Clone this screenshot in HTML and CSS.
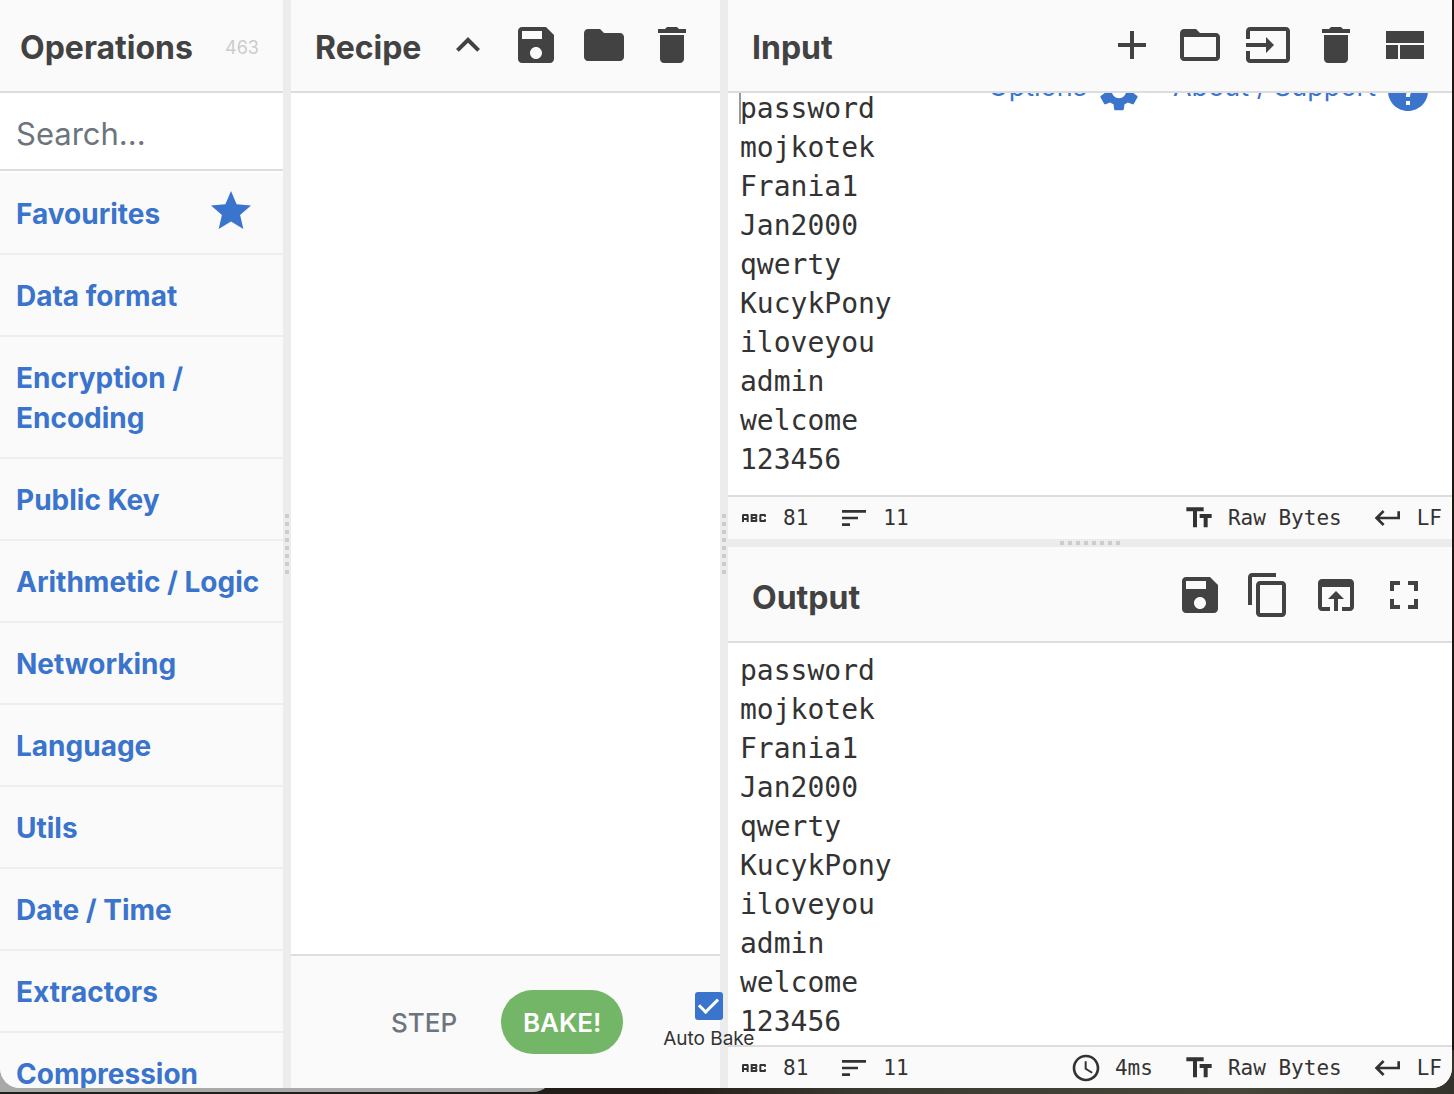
FILE: index.html
```html
<!DOCTYPE html>
<html lang="en">
<head>
<meta charset="utf-8">
<title>CyberChef</title>
<link rel="stylesheet" href="styles.css">
</head>
<body>
<svg class="sprite" aria-hidden="true">
  <symbol id="save" viewBox="0 0 24 24"><path d="M17 3H5c-1.11 0-2 .9-2 2v14c0 1.1.89 2 2 2h14c1.1 0 2-.9 2-2V7l-4-4zm-5 16c-1.66 0-3-1.34-3-3s1.34-3 3-3 3 1.34 3 3-1.34 3-3 3zm3-10H5V5h10v4z"/></symbol>
  <symbol id="folder" viewBox="0 0 24 24"><path d="M10 4H4c-1.1 0-1.99.9-1.99 2L2 18c0 1.1.9 2 2 2h16c1.1 0 2-.9 2-2V8c0-1.1-.9-2-2-2h-8l-2-2z"/></symbol>
  <symbol id="folder-open" viewBox="0 0 24 24"><path d="M20 6h-8l-2-2H4c-1.1 0-1.99.9-1.99 2L2 18c0 1.1.9 2 2 2h16c1.1 0 2-.9 2-2V8c0-1.1-.9-2-2-2zm0 12H4V8h16v10z"/></symbol>
  <symbol id="delete" viewBox="0 0 24 24"><path d="M6 19c0 1.1.9 2 2 2h8c1.1 0 2-.9 2-2V7H6v12zM19 4h-3.5l-1-1h-5l-1 1H5v2h14V4z"/></symbol>
  <symbol id="chevron" viewBox="0 0 24 24"><path d="M7.41 15.41L12 10.83l4.59 4.58L18 14l-6-6-6 6z"/></symbol>
  <symbol id="add" viewBox="0 0 24 24"><path d="M19 13h-6v6h-2v-6H5v-2h6V5h2v6h6v2z"/></symbol>
  <symbol id="input-icon" viewBox="0 0 24 24"><path d="M21 3.01H3c-1.1 0-2 .9-2 2V9h2V4.99h18v14.03H3V15H1v4.01c0 1.1.9 1.98 2 1.98h18c1.1 0 2-.88 2-1.98v-14c0-1.11-.9-2-2-2zM11 16l4-4-4-4v3H1v2h10v3z"/></symbol>
  <symbol id="layout" viewBox="0 0 24 24"><path d="M3 19h6v-7H3v7zm7 0h12v-7H10v7zM3 5v6h19V5H3z"/></symbol>
  <symbol id="copy" viewBox="0 0 24 24"><path d="M16 1H4c-1.1 0-2 .9-2 2v14h2V3h12V1zm3 4H8c-1.1 0-2 .9-2 2v14c0 1.1.9 2 2 2h11c1.1 0 2-.9 2-2V7c0-1.1-.9-2-2-2zm0 16H8V7h11v14z"/></symbol>
  <symbol id="open" viewBox="0 0 24 24"><path d="M19 4H5c-1.11 0-2 .9-2 2v12c0 1.1.89 2 2 2h4v-2H5V8h14v10h-4v2h4c1.1 0 2-.9 2-2V6c0-1.1-.89-2-2-2zm-7 6l-4 4h3v6h2v-6h3l-4-4z"/></symbol>
  <symbol id="fullscreen" viewBox="0 0 24 24"><path d="M7 14H5v5h5v-2H7v-3zm-2-4h2V7h3V5H5v5zm12 7h-3v2h5v-5h-2v3zM14 5v2h3v3h2V5h-5z"/></symbol>
  <symbol id="star" viewBox="0 0 24 24"><path d="M12 17.27L18.18 21l-1.64-7.03L22 9.24l-7.19-.61L12 2 9.19 8.63 2 9.24l5.46 4.73L5.82 21z"/></symbol>
  <symbol id="settings" viewBox="0 0 24 24"><path d="M19.14 12.94c.04-.3.06-.61.06-.94 0-.32-.02-.64-.07-.94l2.03-1.58c.18-.14.23-.41.12-.61l-1.92-3.32c-.12-.22-.37-.29-.59-.22l-2.39.96c-.5-.38-1.03-.7-1.62-.94l-.36-2.54c-.04-.24-.24-.41-.48-.41h-3.84c-.24 0-.43.17-.47.41l-.36 2.54c-.59.24-1.13.57-1.62.94l-2.39-.96c-.22-.08-.47 0-.59.22L2.74 8.87c-.12.21-.08.47.12.61l2.03 1.58c-.05.3-.09.63-.09.94s.02.64.07.94l-2.03 1.58c-.18.14-.23.41-.12.61l1.92 3.32c.12.22.37.29.59.22l2.39-.96c.5.38 1.03.7 1.62.94l.36 2.54c.05.24.24.41.48.41h3.84c.24 0 .44-.17.47-.41l.36-2.54c.59-.24 1.13-.56 1.62-.94l2.39.96c.22.08.47 0 .59-.22l1.92-3.32c.12-.22.07-.47-.12-.61l-2.01-1.58zM12 15.6c-1.98 0-3.6-1.62-3.6-3.6s1.62-3.6 3.6-3.6 3.6 1.62 3.6 3.6-1.62 3.6-3.6 3.6z"/></symbol>
  <symbol id="help" viewBox="0 0 24 24"><path d="M12 2C6.48 2 2 6.48 2 12s4.48 10 10 10 10-4.48 10-10S17.52 2 12 2zm1 17h-2v-2h2v2zm2.07-7.75l-.9.92C13.45 12.9 13 13.5 13 15h-2v-.5c0-1.1.45-2.1 1.17-2.83l1.24-1.26c.37-.36.59-.86.59-1.41 0-1.1-.9-2-2-2s-2 .9-2 2H8c0-2.21 1.79-4 4-4s4 1.79 4 4c0 .88-.36 1.68-.93 2.25z"/></symbol>
  <symbol id="abc" viewBox="0 0 24 24"><path d="M21 11h-1.5v-.5h-2v3h2V13H21v1c0 .55-.45 1-1 1h-3c-.55 0-1-.45-1-1v-4c0-.55.45-1 1-1h3c.55 0 1 .45 1 1v1zM8 10v5H6.5v-1.5h-2V15H3v-5c0-.55.45-1 1-1h3c.55 0 1 .45 1 1zm-1.500.5h-2V12h2v-1.500zM13.500 12c.55 0 1 .45 1 1v1c0 .55-.45 1-1 1h-4V9h4c.55 0 1 .45 1 1v1c0 .55-.45 1-1 1zM11 10.500v.75h2v-.75h-2zm2 2.250h-2v.75h2v-.75z"/></symbol>
  <symbol id="sort" viewBox="0 0 24 24"><path d="M3 18h6v-2H3v2zM3 6v2h18V6H3zm0 7h12v-2H3v2z"/></symbol>
  <symbol id="text-fields" viewBox="0 0 24 24"><path d="M2.500 4v3h5v12h3V7h5V4h-13zm19 5h-9v3h3v7h3v-7h3V9z"/></symbol>
  <symbol id="return" viewBox="0 0 24 24"><path d="M19 7v4H5.830l3.580-3.590L8 6l-6 6 6 6 1.410-1.410L5.830 13H21V7z"/></symbol>
  <symbol id="clock" viewBox="0 0 24 24"><path d="M11.990 2C6.470 2 2 6.480 2 12s4.470 10 9.990 10C17.520 22 22 17.520 22 12S17.520 2 11.990 2zM12 20c-4.420 0-8-3.580-8-8s3.580-8 8-8 8 3.580 8 8-3.580 8-8 8zm.5-13H11v6l5.250 3.150.75-1.230-4.500-2.670z"/></symbol>
</svg>

<main class="window">
  <section class="pane operations">
    <header class="title-bar">
      <h2>Operations</h2>
      <span class="count">463</span>
    </header>
    <input class="search" type="search" placeholder="Search..." aria-label="Search operations">
    <nav class="categories">
      <a href="#">Favourites <svg class="icon"><use href="#star"/></svg></a>
      <a href="#">Data format</a>
      <a href="#">Encryption / Encoding</a>
      <a href="#">Public Key</a>
      <a href="#">Arithmetic / Logic</a>
      <a href="#">Networking</a>
      <a href="#">Language</a>
      <a href="#">Utils</a>
      <a href="#">Date / Time</a>
      <a href="#">Extractors</a>
      <a href="#">Compression</a>
    </nav>
  </section>

  <div class="gutter"><span class="grip"></span></div>

  <section class="pane recipe">
    <header class="title-bar">
      <h2>Recipe</h2>
      <div class="tools">
        <button aria-label="Hide arguments"><svg class="icon"><use href="#chevron"/></svg></button>
        <button aria-label="Save recipe"><svg class="icon"><use href="#save"/></svg></button>
        <button aria-label="Load recipe"><svg class="icon"><use href="#folder"/></svg></button>
        <button aria-label="Clear recipe"><svg class="icon"><use href="#delete"/></svg></button>
      </div>
    </header>
    <div class="recipe-list"></div>
    <footer class="controls">
      <button class="step">STEP</button>
      <button class="bake">BAKE!</button>
      <label class="auto-bake"><input type="checkbox" checked>Auto Bake</label>
    </footer>
  </section>

  <div class="gutter"><span class="grip"></span></div>

  <div class="io">
    <section class="pane">
      <header class="title-bar">
        <h2>Input</h2>
        <div class="tools">
          <button aria-label="Add a new input tab"><svg class="icon"><use href="#add"/></svg></button>
          <button aria-label="Open folder as input"><svg class="icon"><use href="#folder-open"/></svg></button>
          <button aria-label="Open file as input"><svg class="icon"><use href="#input-icon"/></svg></button>
          <button aria-label="Clear input and output"><svg class="icon"><use href="#delete"/></svg></button>
          <button aria-label="Reset pane layout"><svg class="icon"><use href="#layout"/></svg></button>
        </div>
      </header>
      <div class="editor scrolled">
        <textarea aria-label="Input" spellcheck="false">password
mojkotek
Frania1
Jan2000
qwerty
KucykPony
iloveyou
admin
welcome
123456
</textarea>
        <span class="caret"></span>
      </div>
      <div class="banner">
        <a href="#">Options <svg class="icon"><use href="#settings"/></svg></a>
        <a href="#">About / Support <svg class="icon"><use href="#help"/></svg></a>
      </div>
      <footer class="status">
        <span><svg class="icon"><use href="#abc"/></svg>81</span>
        <span><svg class="icon"><use href="#sort"/></svg>11</span>
        <span class="push"><svg class="icon"><use href="#text-fields"/></svg>Raw Bytes</span>
        <span><svg class="icon"><use href="#return"/></svg>LF</span>
      </footer>
    </section>

    <div class="gutter row"><span class="grip"></span></div>

    <section class="pane output">
      <header class="title-bar">
        <h2>Output</h2>
        <div class="tools">
          <button aria-label="Save output"><svg class="icon"><use href="#save"/></svg></button>
          <button aria-label="Copy output"><svg class="icon"><use href="#copy"/></svg></button>
          <button aria-label="Replace input with output"><svg class="icon"><use href="#open"/></svg></button>
          <button aria-label="Maximise output"><svg class="icon"><use href="#fullscreen"/></svg></button>
        </div>
      </header>
      <div class="editor">
        <textarea aria-label="Output" spellcheck="false" readonly>password
mojkotek
Frania1
Jan2000
qwerty
KucykPony
iloveyou
admin
welcome
123456
</textarea>
      </div>
      <footer class="status">
        <span><svg class="icon"><use href="#abc"/></svg>81</span>
        <span><svg class="icon"><use href="#sort"/></svg>11</span>
        <span class="push"><svg class="icon"><use href="#clock"/></svg>4ms</span>
        <span><svg class="icon"><use href="#text-fields"/></svg>Raw Bytes</span>
        <span><svg class="icon"><use href="#return"/></svg>LF</span>
      </footer>
    </section>
  </div>
</main>
</body>
</html>
```

FILE: styles.css
```css
* { box-sizing: border-box; }

body {
  margin: 0;
  height: 100vh;
  padding: 0 2px 6px 0;
  position: relative;
  overflow: hidden;
  background: linear-gradient(90deg, #1c211b 0%, #241c18 45%, #3a3a32 60%, #46463a 85%, #33332c 100%);
  font-family: Inter, "Liberation Sans", sans-serif;
  color: #333;
}

/* edge of the window lying behind */
body::before {
  content: "";
  position: absolute;
  left: 0;
  bottom: 2px;
  width: 38%;
  height: 32px;
  background: #a9a9a9;
  border-bottom-right-radius: 20px;
}

/* strip of desktop to the right of the window */
body::after {
  content: "";
  position: absolute;
  top: 0;
  right: 0;
  width: 2px;
  height: 96%;
  background: #1b160f;
}

.sprite { position: absolute; width: 0; height: 0; }

.window {
  position: relative;
  height: 100%;
  display: grid;
  grid-template-columns: minmax(0, 283fr) 8px minmax(0, 429fr) 8px minmax(0, 724fr);
  background: #fff;
  border-radius: 0 0 20px 20px;
  clip-path: inset(0 round 0 0 20px 20px);
}

.pane {
  position: relative;
  display: flex;
  flex-direction: column;
  min-width: 0;
  min-height: 0;
}

.title-bar {
  position: relative;
  z-index: 2;
  flex: none;
  display: flex;
  align-items: center;
  justify-content: space-between;
  height: 93px;
  padding: 0 24px;
  background: #fafafa;
  border-bottom: 2px solid #ddd;
}
.output .title-bar { height: 96px; padding-top: 3px; }
.operations .title-bar { padding-left: 20px; }

h2 {
  margin: 0;
  padding-top: 4px;
  font-size: 32px;
  line-height: 40px;
  font-weight: 700;
  color: #424242;
}

.count { padding-top: 4px; font-size: 18px; color: #ccc; }

.tools { display: flex; gap: 20px; padding-bottom: 2px; }

button {
  padding: 0;
  border: 0;
  background: none;
  font: inherit;
  color: #424242;
}

.icon { display: block; flex: none; width: 48px; height: 48px; fill: currentColor; }

/* operations */
.search {
  flex: none;
  width: 100%;
  height: 78px;
  margin: 0;
  padding: 5px 16px 0;
  border: 0;
  border-bottom: 2px solid #ddd;
  background: #fff;
  font: 400 31px/40px Inter, "Liberation Sans", sans-serif;
  color: #424242;
}
.search::placeholder { color: #6c757d; opacity: 1; }

.categories { flex: 1; min-height: 0; padding-top: 2px; overflow: hidden; }
.categories a {
  display: flex;
  align-items: center;
  justify-content: space-between;
  min-height: 82px;
  padding: 21px 16px 19px;
  background: #fafafa;
  border-bottom: 2px solid #eee;
  font-size: 28px;
  line-height: 40px;
  font-weight: 700;
  color: #3a74cc;
  text-decoration: none;
}
.categories .icon { margin: -8px 12px -2px 0; }

/* splitters */
.gutter { display: flex; align-items: center; justify-content: center; background: #ececec; }
.grip {
  width: 4px;
  height: 60px;
  background: repeating-linear-gradient(180deg, #ccc 0 4px, transparent 4px 8px);
}
.row .grip {
  width: 60px;
  height: 4px;
  background: repeating-linear-gradient(90deg, #ccc 0 4px, transparent 4px 8px);
}

/* recipe */
.recipe { z-index: 3; }
.recipe-list { flex: 1; }
.controls {
  flex: none;
  display: flex;
  align-items: center;
  height: 134px;
  padding-left: 100px;
  background: #fafafa;
  border-top: 2px solid #ddd;
  white-space: nowrap;
}
.step { font-size: 26px; font-weight: 500; color: #6c757d; }
.bake {
  flex: none;
  width: 122px;
  height: 64px;
  margin: 0 40px 0 44px;
  border-radius: 32px;
  background: #73b667;
  color: #fff;
  font-size: 26px;
  font-weight: 600;
}
.auto-bake {
  display: flex;
  flex-direction: column;
  align-items: center;
  gap: 8px;
  padding-bottom: 3px;
  font-size: 19px;
  line-height: 22px;
}
.auto-bake input {
  appearance: none;
  width: 28px;
  height: 28px;
  margin: 0;
  border-radius: 3px;
  background: #3a74cc;
  display: grid;
  place-items: center;
}
.auto-bake input:checked::before {
  content: "";
  width: 16px;
  height: 8px;
  margin-bottom: 4px;
  border: solid #fff;
  border-width: 0 0 3px 3px;
  transform: rotate(-45deg);
}

/* input and output */
.io { display: grid; grid-template-rows: minmax(0, 539fr) 8px minmax(0, 541fr); min-width: 0; }

.editor { position: relative; flex: 1; min-height: 0; overflow: hidden; }
textarea {
  display: block;
  width: 100%;
  height: 100%;
  padding: 8px 12px 0;
  border: 0;
  outline: 0;
  resize: none;
  overflow: hidden;
  background: #fff;
  font: 28px/39px "DejaVu Sans Mono", monospace;
  color: #333;
}
.scrolled textarea { height: 120%; margin-top: -12px; }
.caret { position: absolute; top: 0; left: 11px; width: 2px; height: 31px; background: #999; }

.banner {
  position: absolute;
  z-index: 1;
  top: 67px;
  right: 20px;
  display: flex;
  gap: 30px;
}
.banner a {
  display: flex;
  align-items: flex-start;
  gap: 8px;
  font-size: 27px;
  line-height: 40px;
  color: #3a74cc;
  text-decoration: none;
}

.status {
  flex: none;
  display: flex;
  align-items: center;
  gap: 30px;
  height: 44px;
  padding: 0 10px;
  background: #fafafa;
  border-top: 2px solid #ddd;
  font: 21px/32px "DejaVu Sans Mono", monospace;
}
.output .status { height: 43px; }
.status span { display: flex; align-items: center; gap: 13px; white-space: nowrap; }
.status .push { margin-left: auto; }
.status .icon { width: 32px; height: 32px; }
```
